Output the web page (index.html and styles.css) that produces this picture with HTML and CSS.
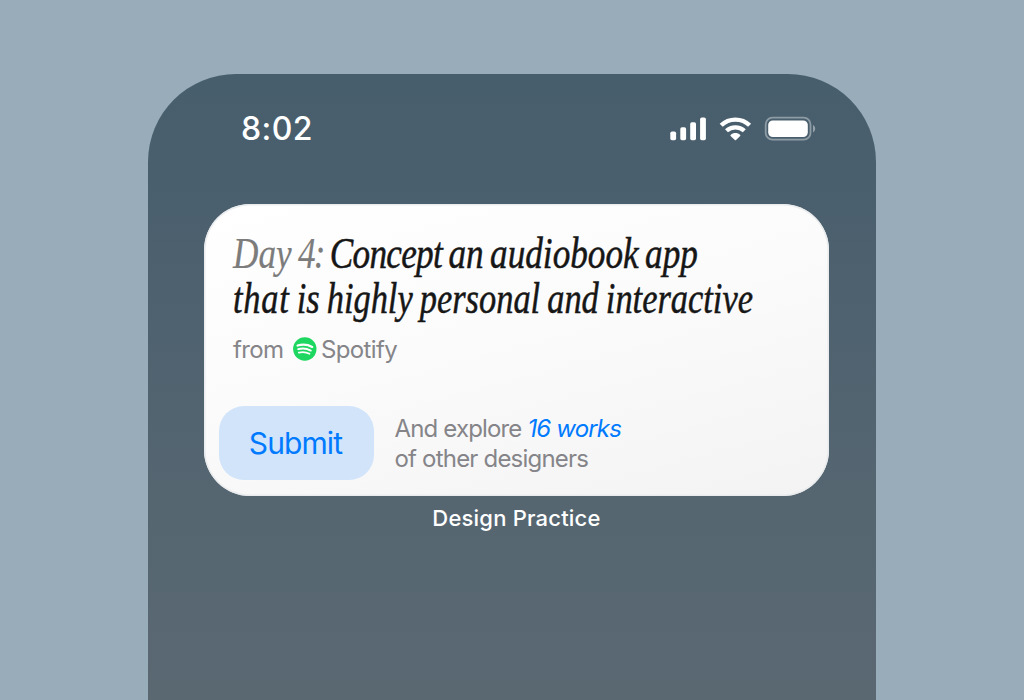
FILE: index.html
```html
<!DOCTYPE html>
<html lang="en">
<head>
<meta charset="utf-8">
<title>Design Practice</title>
<link rel="stylesheet" href="styles.css">
</head>
<body>
<main class="phone">
  <header class="status">
    <time class="clock">8:02</time>
    <svg class="status-icons" width="146" height="26" viewBox="0 0 146 26" fill="none">
      <g fill="#fff">
        <rect x="0.3" y="15.5" width="5.8" height="8.8" rx="1.7"/>
        <rect x="10.3" y="11.2" width="5.8" height="13.1" rx="1.7"/>
        <rect x="20.2" y="6.2" width="5.8" height="18.1" rx="1.7"/>
        <rect x="30.1" y="1.6" width="5.8" height="22.7" rx="1.7"/>
      </g>
      <g transform="translate(49.7 1.2)">
        <g stroke="#fff" stroke-width="4.3">
          <path d="M1.5 8.1C9.2 .4 22.2 .4 29.9 8.1"/>
          <path d="M6.8 13.6C11.8 8.9 19.6 8.9 24.6 13.6"/>
        </g>
        <path d="M10.9 17.8C13.6 15.2 17.8 15.2 20.5 17.8Q20.9 18.3 20.5 18.7L16.3 22.9Q15.7 23.4 15.1 22.9L10.9 18.7Q10.5 18.3 10.9 17.8Z" fill="#fff"/>
      </g>
      <rect x="95.7" y="1.7" width="44.8" height="22" rx="6.8" stroke="#fff" stroke-opacity=".38" stroke-width="1.8"/>
      <rect x="98.2" y="4.4" width="39.6" height="16.7" rx="4.6" fill="#fff"/>
      <path d="M143 9C145.9 10.4 145.9 15 143 16.4Z" fill="#fff" fill-opacity=".42"/>
    </svg>
  </header>
  <section class="card">
    <h1 class="title">
      <span class="line line-first"><span class="day">Day <span class="number">4:</span></span> <span class="concept">Concept</span> an audiobook app</span>
      <span class="line line-second"><span class="that">that</span> is highly personal and interactive</span>
    </h1>
    <p class="source">
      <span class="from">from</span>
      <svg class="spotify" width="24" height="24" viewBox="0 0 24 24">
        <circle cx="11.8" cy="12" r="11.7" fill="#1ed760"/>
        <g fill="none" stroke="#fff" stroke-linecap="round">
          <path d="M4.6 8.5C9.4 7.1 15 7.6 19.2 9.9" stroke-width="2.3"/>
          <path d="M5.2 12.2C9.4 11 14.1 11.6 17.8 13.6" stroke-width="1.9"/>
          <path d="M5.8 15.6C9.5 14.7 13.4 15.1 16.5 16.8" stroke-width="1.6"/>
        </g>
      </svg>
      <span class="brand">Spotify</span>
    </p>
    <div class="actions">
      <button class="submit" type="button">Submit</button>
      <p class="explore">And explore <em class="works">16 works</em><br><span class="others">of other designers</span></p>
    </div>
  </section>
  <p class="caption">Design Practice</p>
</main>
</body>
</html>
```

FILE: styles.css
```css
* { box-sizing: border-box; }
body {
  margin: 0;
  height: 700px;
  overflow: hidden;
  padding: 74px 148px 0;
  background: #98acb9;
  font-family: Inter, "Liberation Sans", sans-serif;
}
h1, p { margin: 0; }
.phone {
  height: 626px;
  padding: 0 47px 0 56px;
  border-radius: 88px 88px 0 0;
  background: linear-gradient(180deg, #475e6d 0%, #4c606e 28%, #556671 68%, #5a6872 100%);
}
.status {
  height: 130px;
  padding: 42px 13px 0 37px;
  display: flex;
  justify-content: space-between;
  align-items: flex-start;
}
.clock {
  color: #fff;
  font-size: 32px;
  line-height: 25px;
  font-weight: 550;
  letter-spacing: 0.4px;
}
.card {
  height: 292px;
  padding: 27px 15px 0;
  border-radius: 46px;
  background: linear-gradient(165deg, #fff 0%, #fbfbfb 45%, #f3f3f3 100%);
  box-shadow: inset 0 0 0 1.5px rgba(232, 234, 236, 0.9);
}
.title {
  padding-left: 14px;
  font-family: "Liberation Serif", serif;
  font-style: italic;
  font-weight: 400;
  font-size: 44px;
  line-height: 45px;
  color: #161616;
  -webkit-text-stroke: 0.5px currentColor;
}
.line {
  display: block;
  width: max-content;
  white-space: nowrap;
  transform-origin: 0 0;
}
.line-first { transform: scaleX(0.8); word-spacing: -3px; }
.line-second { transform: scaleX(0.782); word-spacing: -2px; }
.day { color: #7c7c7c; -webkit-text-stroke: 0.2px currentColor; }
.number { letter-spacing: -2.5px; }
.concept { letter-spacing: -0.9px; }
.that { letter-spacing: 1px; }
.source {
  display: flex;
  align-items: center;
  height: 30px;
  margin-top: 13px;
  padding-left: 14px;
  font-size: 24px;
  color: #858589;
}
.from { width: 60px; letter-spacing: -0.6px; }
.brand { margin-left: 4px; letter-spacing: -0.65px; }
.actions {
  display: flex;
  margin-top: 42px;
}
.submit {
  width: 155px;
  height: 74px;
  border: 0;
  border-radius: 25px;
  padding: 0 2px 0 0;
  background: #d1e4fa;
  color: #007aff;
  font: 400 30px/38px Inter, sans-serif;
  letter-spacing: -0.9px;
}
.explore {
  margin: 8px 0 0 20.5px;
  font-size: 24px;
  line-height: 30px;
  letter-spacing: -0.84px;
  color: #858589;
}
.works { color: #007aff; }
.others { letter-spacing: -0.8px; }
.caption {
  margin: 7px 0 0;
  text-align: center;
  color: #fff;
  font-size: 22px;
  line-height: 30px;
  font-weight: 500;
  letter-spacing: 0.2px;
}
```
